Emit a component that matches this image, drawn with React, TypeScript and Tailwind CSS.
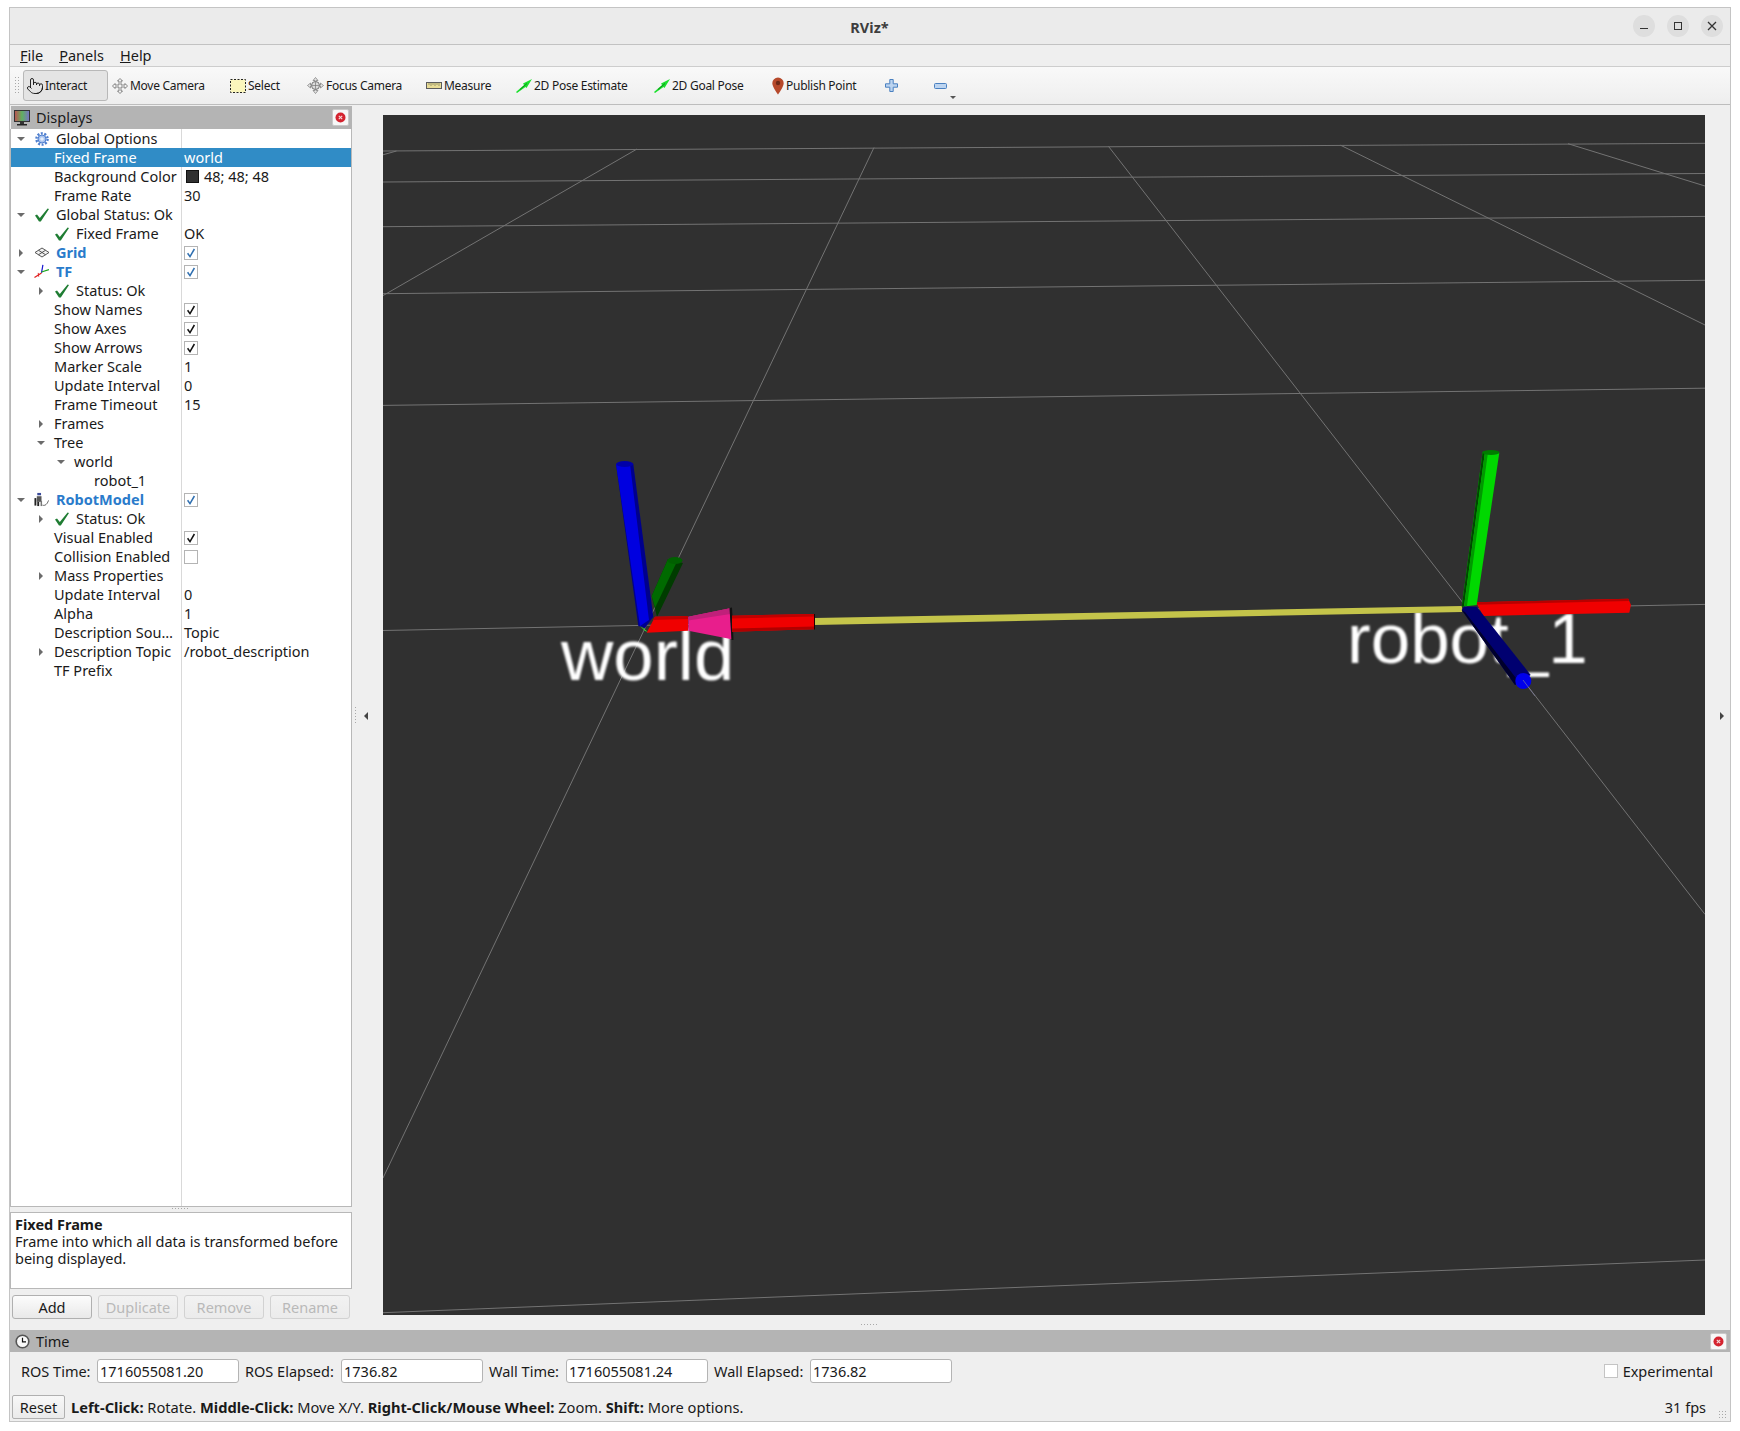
import { Pointer } from "lucide-react";

type Check = "blue" | "black" | "empty";
type RowIcon = "gear" | "ok" | "grid" | "tf" | "robot";

interface Row {
  name: string;
  depth: number;
  arrow?: "down" | "right";
  icon?: RowIcon;
  value?: string;
  check?: Check;
  strong?: boolean;
  selected?: boolean;
  swatch?: boolean;
}

const rows: Row[] = [
  { name: "Global Options", depth: 0, arrow: "down", icon: "gear" },
  { name: "Fixed Frame", depth: 1, value: "world", selected: true },
  { name: "Background Color", depth: 1, value: "48; 48; 48", swatch: true },
  { name: "Frame Rate", depth: 1, value: "30" },
  { name: "Global Status: Ok", depth: 0, arrow: "down", icon: "ok" },
  { name: "Fixed Frame", depth: 1, icon: "ok", value: "OK" },
  { name: "Grid", depth: 0, arrow: "right", icon: "grid", check: "blue", strong: true },
  { name: "TF", depth: 0, arrow: "down", icon: "tf", check: "blue", strong: true },
  { name: "Status: Ok", depth: 1, arrow: "right", icon: "ok" },
  { name: "Show Names", depth: 1, check: "black" },
  { name: "Show Axes", depth: 1, check: "black" },
  { name: "Show Arrows", depth: 1, check: "black" },
  { name: "Marker Scale", depth: 1, value: "1" },
  { name: "Update Interval", depth: 1, value: "0" },
  { name: "Frame Timeout", depth: 1, value: "15" },
  { name: "Frames", depth: 1, arrow: "right" },
  { name: "Tree", depth: 1, arrow: "down" },
  { name: "world", depth: 2, arrow: "down" },
  { name: "robot_1", depth: 3 },
  { name: "RobotModel", depth: 0, arrow: "down", icon: "robot", check: "blue", strong: true },
  { name: "Status: Ok", depth: 1, arrow: "right", icon: "ok" },
  { name: "Visual Enabled", depth: 1, check: "black" },
  { name: "Collision Enabled", depth: 1, check: "empty" },
  { name: "Mass Properties", depth: 1, arrow: "right" },
  { name: "Update Interval", depth: 1, value: "0" },
  { name: "Alpha", depth: 1, value: "1" },
  { name: "Description Sou…", depth: 1, value: "Topic" },
  { name: "Description Topic", depth: 1, arrow: "right", value: "/robot_description" },
  { name: "TF Prefix", depth: 1 },
];

const depthPad = ["pl-[3px]", "pl-[23px]", "pl-[43px]", "pl-[63px]"];

function TreeIcon({ icon }: { icon: RowIcon }) {
  if (icon === "ok") {
    return (
      <svg width="14" height="14" viewBox="0 0 14 14">
        <polygon points="0,7.5 2,6.5 4.8,10 12.6,0.5 14,1 5.8,13.5 4,13.5" fill="#1f7d33" />
      </svg>
    );
  }
  if (icon === "gear") {
    return (
      <svg width="14" height="14" viewBox="0 0 14 14">
        <circle cx="7" cy="7" r="5.6" fill="none" stroke="#4f7fcf" strokeWidth="2.4" strokeDasharray="2 1.5" />
        <circle cx="7" cy="7" r="4" fill="#a9c4ee" stroke="#4f7fcf" strokeWidth="1" />
        <circle cx="7" cy="7" r="1.8" fill="#e4edfa" />
      </svg>
    );
  }
  if (icon === "grid") {
    return (
      <svg width="14" height="14" viewBox="0 0 14 14" fill="none" stroke="#444" strokeWidth="0.9">
        <polygon points="7,2 14,6.5 7,11 0,6.5" fill="#f2f2f2" />
        <path d="M3.5 4.3 10.5 8.7M10.5 4.3 3.5 8.7" />
      </svg>
    );
  }
  if (icon === "tf") {
    return (
      <svg width="16" height="15" viewBox="0 0 16 15" className="-ml-[1px]">
        <line x1="8" y1="9" x2="9.5" y2="0.5" stroke="#1a1ad0" strokeWidth="1.3" />
        <line x1="8" y1="8" x2="16" y2="5.5" stroke="#19a319" strokeWidth="1.3" />
        <line x1="8" y1="9" x2="0.5" y2="14" stroke="#e02020" strokeWidth="1.3" />
        <line x1="4.5" y1="9" x2="5" y2="13" stroke="#e02020" strokeWidth="1" />
      </svg>
    );
  }
  return (
    <svg width="16" height="15" viewBox="0 0 16 15" className="-ml-[1px]">
      <rect x="3.5" y="0.5" width="4" height="2.5" fill="#3a4a9a" />
      <rect x="3" y="4" width="5" height="6" fill="#555" />
      <rect x="0.5" y="6" width="2" height="8" fill="#222" />
      <rect x="3.5" y="10" width="2" height="4.5" fill="#222" />
      <rect x="7" y="9" width="1.6" height="5.5" fill="#777" />
      <path d="M9 13.5c3 1 5-1 6.5-5" fill="none" stroke="#555" strokeWidth="1" />
    </svg>
  );
}

function Arrow({ dir }: { dir: "down" | "right" }) {
  return (
    <svg width="14" height="14" viewBox="0 0 14 14">
      {dir === "down" ? <polygon points="3,5 11,5 7,9" fill="#6b6b6b" /> : <polygon points="5,3 9,7 5,11" fill="#6b6b6b" />}
    </svg>
  );
}

function CheckBox({ kind }: { kind: Check }) {
  return (
    <span className="flex h-[14px] w-[14px] items-center justify-center border border-[#b4b4b4] bg-white">
      {kind !== "empty" && (
        <svg width="10" height="10" viewBox="0 0 10 10">
          <path d="M1.6 5.2 4 8.6 8.4 1" fill="none" stroke={kind === "blue" ? "#2f6fb0" : "#111"} strokeWidth="1.5" />
        </svg>
      )}
    </span>
  );
}

function TreeRow({ row }: { row: Row }) {
  return (
    <div className={`flex h-[19px] items-center ${row.selected ? "bg-[#308cc6] text-white" : ""}`}>
      <div className={`flex h-full w-[171px] items-center ${depthPad[row.depth]} ${row.selected ? "" : "border-r border-[#d9d9d9]"}`}>
        <span className="flex w-[14px] shrink-0 items-center justify-center">{row.arrow && <Arrow dir={row.arrow} />}</span>
        {row.icon ? (
          <span className="ml-[7px] flex w-[14px] shrink-0 items-center">
            <TreeIcon icon={row.icon} />
          </span>
        ) : null}
        <span className={`whitespace-nowrap ${row.icon ? "ml-[7px]" : "ml-[6px]"} ${row.strong ? "font-bold text-[#2a7bcb]" : ""}`}>{row.name}</span>
      </div>
      <div className="flex items-center pl-[2px] whitespace-nowrap">
        {row.swatch && <span className="mr-[5px] ml-[2px] h-[13px] w-[13px] border border-[#111] bg-[#303030]" />}
        {row.check && <CheckBox kind={row.check} />}
        {row.value}
      </div>
    </div>
  );
}

function CloseButton() {
  return (
    <span className="flex h-[17px] w-[17px] items-center justify-center rounded-[2px] border border-[#c9c9c9] bg-[#f7f7f7]">
      <svg width="11" height="11" viewBox="0 0 11 11">
        <circle cx="5.5" cy="5.5" r="5" fill="#d4232f" />
        <path d="M3.8 3.8 7.2 7.2M7.2 3.8 3.8 7.2" stroke="#f6dcdc" strokeWidth="1.1" />
      </svg>
    </span>
  );
}

function PanelButton({ label, disabled }: { label: string; disabled?: boolean }) {
  return (
    <button
      className={`h-[24px] w-[80px] rounded-[3px] border bg-gradient-to-b ${
        disabled ? "border-[#d2d2d2] from-[#f2f2f2] to-[#ebebeb] text-[#b9b9b9]" : "border-[#b0b0b0] from-[#fcfcfc] to-[#e9e9e9] text-[#1a1a1a]"
      }`}
    >
      {label}
    </button>
  );
}

function Field({ value }: { value: string }) {
  return (
    <div className="flex h-[24px] w-[142px] shrink-0 items-center rounded-[3px] border border-[#b4b4b4] bg-white pl-[2px]">{value}</div>
  );
}

function HandleDots({ cols, rows: r, className }: { cols: number; rows: number; className?: string }) {
  const w = cols * 3;
  const h = r * 3;
  const dots = [];
  for (let x = 0; x < cols; x++) for (let y = 0; y < r; y++) dots.push(<rect key={`${x}-${y}`} x={x * 3} y={y * 3} width="1" height="1" fill="#a8a8a8" />);
  return (
    <svg width={w} height={h} className={className}>
      {dots}
    </svg>
  );
}

function ToolIcon({ name }: { name: string }) {
  switch (name) {
    case "move":
      return (
        <svg width="16" height="16" viewBox="0 0 16 16">
          <path d="M8 .5 10.5 3H9v4h4V5.5L15.5 8 13 10.5V9H9v4h1.5L8 15.5 5.5 13H7V9H3v1.5L.5 8 3 5.5V7h4V3H5.5Z" fill="#f4f4f4" stroke="#6a6a6a" strokeWidth=".8" />
        </svg>
      );
    case "select":
      return (
        <svg width="16" height="14" viewBox="0 0 16 14">
          <rect x=".5" y=".5" width="15" height="13" fill="#fbf6bc" stroke="#222" strokeDasharray="2 1.5" />
        </svg>
      );
    case "focus":
      return (
        <svg width="17" height="17" viewBox="0 0 17 17">
          <path d="M8.5.5 11 3.5H9.2V5H8V3.5H6Zm0 16L11 13.5H9.2V12H8v1.5H6ZM.5 8.5 3.5 6v2H5v1H3.5v2Zm16 0L13.5 6v2H12v1h1.5v2Z" fill="#e4e4e4" stroke="#777" strokeWidth=".7" />
          <circle cx="8.5" cy="8.5" r="4" fill="#dcdcdc" stroke="#777" />
          <path d="M8.5 5v7M5 8.5h7" stroke="#777" strokeWidth=".7" />
        </svg>
      );
    case "measure":
      return (
        <svg width="16" height="7" viewBox="0 0 16 7">
          <rect x=".5" y=".5" width="15" height="6" fill="#e8dc96" stroke="#5c5c5c" />
          <path d="M3 1v2M5 1v3M7 1v2M9 1v3M11 1v2M13 1v3" stroke="#7a7a5a" strokeWidth=".7" />
        </svg>
      );
    case "pose":
      return (
        <svg width="16" height="14" viewBox="0 0 16 14">
          <polygon points="0,13 1,14 9.5,8 10.5,9 16,0 7,4.5 8,6" fill="#1ce02e" />
          <line x1="4" y1="10.5" x2="11" y2="4.5" stroke="#0a7a16" strokeWidth=".8" />
        </svg>
      );
    case "pin":
      return (
        <svg width="12" height="18" viewBox="0 0 12 18">
          <path d="M6 .5A5.7 5.7 0 0 0 .3 6.2C.3 10 6 17.5 6 17.5s5.7-7.5 5.7-11.3A5.7 5.7 0 0 0 6 .5Z" fill="#b6492b" />
          <circle cx="6" cy="6" r="2.2" fill="#6e2a18" />
        </svg>
      );
    case "plus":
      return (
        <svg width="13" height="13" viewBox="0 0 13 13">
          <path d="M4.8.5h3.4v4.3h4.3v3.4H8.2v4.3H4.8V8.2H.5V4.8h4.3Z" fill="#bcd4f0" stroke="#4a80c0" />
        </svg>
      );
    default:
      return (
        <svg width="13" height="6" viewBox="0 0 13 6">
          <rect x=".5" y=".5" width="12" height="5" rx="1" fill="#bcd4f0" stroke="#4a80c0" />
        </svg>
      );
  }
}

const tools = [
  { label: "Move Camera", icon: "move", cls: "w-[118px] pl-[4px]", iconBox: "w-[16px]" },
  { label: "Select", icon: "select", cls: "w-[77px] pl-[4px]", iconBox: "w-[16px]" },
  { label: "Focus Camera", icon: "focus", cls: "w-[119px] pl-[4px]", iconBox: "w-[17px]" },
  { label: "Measure", icon: "measure", cls: "w-[90px] pl-[4px]", iconBox: "w-[16px]" },
  { label: "2D Pose Estimate", icon: "pose", cls: "w-[138px] pl-[4px]", iconBox: "w-[16px]" },
  { label: "2D Goal Pose", icon: "pose", cls: "w-[117px] pl-[4px]", iconBox: "w-[16px]" },
  { label: "Publish Point", icon: "pin", cls: "w-[115px] pl-[4px]", iconBox: "w-[13px]" },
];

function Scene() {
  return (
    <svg viewBox="383 115 1322 1200" width="1322" height="1200" className="block">
      <defs>
        <filter id="soft">
          <feGaussianBlur stdDeviation="1" />
        </filter>
      </defs>
      <rect x="383" y="115" width="1322" height="1200" fill="#303030" />
      <g stroke="#737373" strokeWidth="1" fill="none">
        <line x1="383" y1="151" x2="1705" y2="143.3" />
        <line x1="383" y1="182" x2="1705" y2="173.5" />
        <line x1="383" y1="226.7" x2="1705" y2="216.4" />
        <line x1="383" y1="293.7" x2="1705" y2="280.3" />
        <line x1="383" y1="405.4" x2="1705" y2="388.2" />
        <line x1="383" y1="630.5" x2="1705" y2="604.4" />
        <line x1="383" y1="1312.7" x2="1705" y2="1260" />
        <line x1="383" y1="154.8" x2="396.5" y2="151" />
        <line x1="637" y1="149" x2="383" y2="295.6" />
        <line x1="874" y1="147.5" x2="383" y2="1178" />
        <line x1="1108.5" y1="146.4" x2="1705" y2="914.4" />
        <line x1="1340.5" y1="145.2" x2="1705" y2="325" />
        <line x1="1568" y1="143.7" x2="1705" y2="186" />
      </g>

      {/* frame labels */}
      <g fontFamily="'Liberation Sans', sans-serif" fill="#ffffff" filter="url(#soft)">
        <text x="561" y="680" fontSize="72.5">world</text>
        <text x="1347" y="663" fontSize="71">robot_1</text>
      </g>

      {/* yellow link between frames */}
      <polygon points="814,618 1462,606 1462,612 814,625" fill="#c4c44a" />

      {/* world axes */}
      <polygon points="651.7,596 668,559 683,563 657,617" fill="#003c00" />
      <polygon points="651.7,596 668,559 677,561.5 655,608" fill="#006a00" />
      <ellipse cx="675" cy="560.5" rx="7.5" ry="3.5" fill="#006000" />
      <polygon points="616,464 633.3,464 653.3,616.7 645,628 638.3,626" fill="#00008c" />
      <polygon points="616,464 630,464 649,620 640,626" fill="#0000e0" />
      <ellipse cx="624.7" cy="464" rx="8.6" ry="3" fill="#0000a8" />
      <polygon points="640,626 645,631 648,632 643,628" fill="#30e030" />
      <polygon points="655,616.7 688,616 688,630.7 646.7,632.7" fill="#f00000" />
      <polygon points="655,616.7 688,616 688,619 652.5,620" fill="#c00000" />
      <polygon points="688.3,616.7 730,608.3 731.7,639.3 688.3,630.7" fill="#e81e8c" />
      <polygon points="688.3,616.7 730,608.3 730.5,614 688.3,620.5" fill="#c0207a" />
      <polygon points="729.5,608 732,607.5 733.5,640 731.5,640" fill="#111" />
      <polygon points="732,615.7 814,614 814,629.3 732,631.7" fill="#f00000" />
      <polygon points="732,615.7 814,614 814,616.5 732,618.5" fill="#c00000" />
      <polygon points="732,628.5 814,626.5 814,629.3 732,631.7" fill="#b00000" />
      <line x1="814.5" y1="614" x2="814.5" y2="629.5" stroke="#200000" />

      {/* robot_1 axes */}
      <polygon points="1476,602.3 1628.3,598.7 1631,605 1629.3,612.7 1483.3,616" fill="#f00000" />
      <polygon points="1476,602.3 1628.3,598.7 1629,601 1476,604.8" fill="#b80000" />
      <polygon points="1461.7,606.7 1476.7,605 1499.3,452.7 1482.7,451.7" fill="#00d800" />
      <polygon points="1461.7,606.7 1464,606.4 1485,452 1482.7,451.7" fill="#004800" />
      <polygon points="1464,606.4 1467,606 1488,452.2 1485,452" fill="#009800" />
      <ellipse cx="1491" cy="452.5" rx="8.4" ry="2.5" fill="#007c00" />
      <polygon points="1461.7,610 1464,606.5 1476.7,606.7 1530.7,675 1515,685" fill="#000070" />
      <polygon points="1461.7,610 1465,612 1519,682 1515,685" fill="#00002c" />
      <circle cx="1523.3" cy="681" r="8" fill="#0000ec" />
      <line x1="1523" y1="680" x2="1535" y2="696" stroke="#7a7a9a" strokeWidth=".7" />
    </svg>
  );
}

export default function App() {
  return (
    <div className="h-[1431px] w-[1740px] bg-white pt-[7px] pl-[9px] font-['Noto_Sans',sans-serif] text-[14.5px] leading-[17px] text-[#1a1a1a]">
      <div className="flex h-[1415px] w-[1722px] flex-col border border-[#c4c4c4]">
        {/* title bar */}
        <div className="flex h-[37px] shrink-0 items-center border-b border-[#c2c2c2] bg-[#ebebeb]">
          <div className="flex-1" />
          <span className="pt-[2px] pl-[6px] text-[14.5px] font-bold text-[#3d3d3d]">RViz*</span>
          <div className="flex flex-1 justify-end gap-[12px] pr-[7px]">
            <span className="flex h-[22px] w-[22px] items-center justify-center rounded-full bg-[#dedede]">
              <span className="mt-[5px] h-[1.5px] w-[8px] bg-[#333]" />
            </span>
            <span className="flex h-[22px] w-[22px] items-center justify-center rounded-full bg-[#dedede]">
              <span className="h-[8px] w-[8px] border border-[#333]" />
            </span>
            <span className="flex h-[22px] w-[22px] items-center justify-center rounded-full bg-[#dedede]">
              <svg width="10" height="10" viewBox="0 0 10 10">
                <path d="M1 1 9 9M9 1 1 9" stroke="#333" strokeWidth="1.3" />
              </svg>
            </span>
          </div>
        </div>

        {/* menu bar */}
        <div className="flex h-[21px] shrink-0 items-center gap-[16px] bg-[#efefef] pl-[10px]">
          <span><span className="underline">F</span>ile</span>
          <span><span className="underline">P</span>anels</span>
          <span><span className="underline">H</span>elp</span>
        </div>

        {/* toolbar */}
        <div className="flex h-[39px] shrink-0 items-center border-y border-[#cdcdcd] border-b-[#bdbdbd] bg-gradient-to-b from-[#f9f9f9] to-[#eeeeee] text-[12px] tracking-[-0.27px]">
          <HandleDots cols={2} rows={6} className="mr-[2px] ml-[5px]" />
          <div className="flex h-[31px] w-[85px] items-center rounded-[3px] border border-[#b8b8b8] bg-[#e4e4e4] pl-[2px]">
            <Pointer size={18} strokeWidth={1.2} color="#111" />
            <span className="ml-[1px]">Interact</span>
          </div>
          {tools.map((t) => (
            <div key={t.label} className={`flex items-center ${t.cls}`}>
              <span className={`flex ${t.iconBox} shrink-0 items-center justify-center`}>
                <ToolIcon name={t.icon} />
              </span>
              <span className="ml-[2px] whitespace-nowrap">{t.label}</span>
            </div>
          ))}
          <div className="flex w-[48px] pl-[3px]"><ToolIcon name="plus" /></div>
          <div className="relative flex w-[30px] pl-[4px]">
            <ToolIcon name="minus" />
            <span className="absolute top-[13px] left-[20px] h-0 w-0 border-x-[3px] border-t-[3px] border-x-transparent border-t-[#555]" />
          </div>
        </div>

        {/* main area */}
        <div className="flex h-[1225px] shrink-0 flex-col bg-[#efefef]">
          <div className="flex h-[1215px]">
            {/* displays panel */}
            <div className="flex w-[342px] shrink-0 flex-col pt-px">
              <div className="ml-px flex h-[23px] shrink-0 items-center justify-between bg-[#b4b4b4] pr-[3px] pl-[3px]">
                <div className="flex items-center gap-[6px]">
                  <svg width="16" height="16" viewBox="0 0 16 16">
                    <defs>
                      <linearGradient id="screen" x1="0" x2="1" y1="0" y2="0">
                        <stop offset="0" stopColor="#c05050" />
                        <stop offset="0.5" stopColor="#60b060" />
                        <stop offset="1" stopColor="#7a70c8" />
                      </linearGradient>
                    </defs>
                    <rect x=".5" y=".5" width="15" height="11" fill="url(#screen)" stroke="#333" />
                    <rect x="6" y="12" width="4" height="2" fill="#333" />
                    <rect x="3" y="14" width="10" height="1.5" fill="#222" />
                  </svg>
                  <span>Displays</span>
                </div>
                <CloseButton />
              </div>
              <div className="flex min-h-0 flex-1 flex-col border-x border-b border-[#b8b8b8] bg-white">
                {rows.map((row, i) => (
                  <TreeRow key={i} row={row} />
                ))}
                <div className="w-[171px] flex-1 border-r border-[#d9d9d9]" />
              </div>
              <div className="flex h-[5px] shrink-0 items-center justify-center">
                <HandleDots cols={6} rows={1} />
              </div>
              <div className="h-[77px] shrink-0 border border-[#b8b8b8] bg-white pt-[3px] pl-[4px]">
                <div className="font-bold">Fixed Frame</div>
                <div className="w-[325px]">Frame into which all data is transformed before being displayed.</div>
              </div>
              <div className="flex shrink-0 gap-[6px] pt-[6px] pb-px pl-[2px]">
                <PanelButton label="Add" />
                <PanelButton label="Duplicate" disabled />
                <PanelButton label="Remove" disabled />
                <PanelButton label="Rename" disabled />
              </div>
            </div>

            {/* left gutter */}
            <div className="flex w-[31px] shrink-0 items-center pt-[6px] pl-[3px]">
              <HandleDots cols={1} rows={6} />
              <span className="ml-[6px] h-0 w-0 border-y-[4px] border-r-[4px] border-y-transparent border-r-[#444]" />
            </div>

            {/* 3d view */}
            <div className="w-[1322px] shrink-0 pt-[10px]">
              <Scene />
            </div>

            {/* right gutter */}
            <div className="flex flex-1 items-center justify-center pt-[6px]">
              <span className="ml-[9px] h-0 w-0 border-y-[4px] border-l-[4px] border-y-transparent border-l-[#444]" />
            </div>
          </div>
          <div className="flex flex-1 items-center justify-center">
            <HandleDots cols={6} rows={1} />
          </div>
        </div>

        {/* time panel */}
        <div className="flex flex-1 flex-col bg-[#efefef]">
          <div className="flex h-[22px] shrink-0 items-center justify-between bg-[#b4b4b4] pr-[3px] pl-[5px]">
            <div className="flex items-center gap-[6px]">
              <svg width="15" height="15" viewBox="0 0 15 15">
                <circle cx="7.5" cy="7.5" r="6.3" fill="#fafafa" stroke="#555" strokeWidth="1.6" />
                <path d="M7.5 3.8v4H11" fill="none" stroke="#111" strokeWidth="1.2" />
              </svg>
              <span>Time</span>
            </div>
            <CloseButton />
          </div>
          <div className="mt-[7px] flex h-[24px] shrink-0 items-center">
            <span className="w-[87px] pl-[11px]">ROS Time:</span>
            <Field value="1716055081.20" />
            <span className="w-[102px] pl-[6px]">ROS Elapsed:</span>
            <Field value="1736.82" />
            <span className="w-[83px] pl-[6px]">Wall Time:</span>
            <Field value="1716055081.24" />
            <span className="w-[102px] pl-[6px]">Wall Elapsed:</span>
            <Field value="1736.82" />
            <div className="ml-auto flex items-center pr-[17px]">
              <span className="h-[14px] w-[14px] border border-[#c4c4c4] bg-white" />
              <span className="ml-[5px]">Experimental</span>
            </div>
          </div>
          <div className="relative mt-[12px] flex h-[24px] shrink-0 items-center pl-[2px]">
            <button className="h-[24px] w-[53px] rounded-[2px] border border-[#b0b0b0] bg-gradient-to-b from-[#f8f8f8] to-[#eaeaea]">Reset</button>
            <span className="ml-[6px] whitespace-nowrap text-[14.65px]">
              <b>Left-Click:</b> Rotate. <b>Middle-Click:</b> Move X/Y. <b>Right-Click/Mouse Wheel:</b> Zoom. <b>Shift:</b> More options.
            </span>
            <span className="ml-auto pr-[24px]">31 fps</span>
            <HandleDots cols={3} rows={3} className="absolute right-[2px] bottom-[-1px]" />
          </div>
        </div>
      </div>
    </div>
  );
}
